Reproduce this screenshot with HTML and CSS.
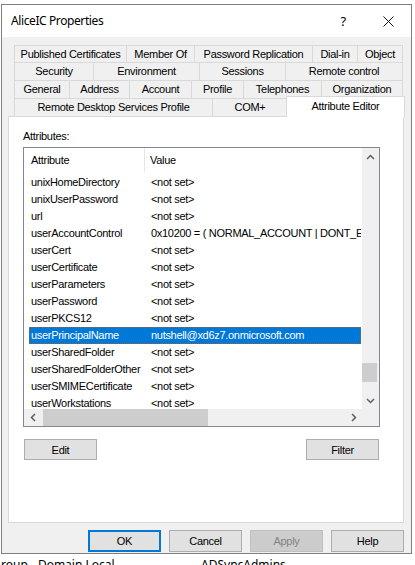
FILE: index.html
```html
<!DOCTYPE html>
<html>
<head>
<meta charset="utf-8">
<link rel="stylesheet" href="styles.css">
</head>
<body>
<div class="screen">
  <div class="window">
    <div class="titlebar">
      <span class="title">AliceIC Properties</span>
      <span class="help">?</span>
      <span class="close">
        <svg width="11" height="11" viewBox="0 0 11 11"><path d="M0.5 0.5 L10.5 10.5 M10.5 0.5 L0.5 10.5" stroke="#111" stroke-width="1" fill="none"/></svg>
      </span>
    </div>
    <div class="client">
      <div class="tabs">
        <div class="tab-row row-first">
          <div class="tab w113">Published Certificates</div>
          <div class="tab w69">Member Of</div>
          <div class="tab w119">Password Replication</div>
          <div class="tab w46">Dial-in</div>
          <div class="tab w46">Object</div>
        </div>
        <div class="tab-row">
          <div class="tab w80">Security</div>
          <div class="tab w107">Environment</div>
          <div class="tab w87">Sessions</div>
          <div class="tab w118">Remote control</div>
        </div>
        <div class="tab-row">
          <div class="tab w56">General</div>
          <div class="tab w61">Address</div>
          <div class="tab w63">Account</div>
          <div class="tab w53">Profile</div>
          <div class="tab w79">Telephones</div>
          <div class="tab w82">Organization</div>
        </div>
        <div class="tab-row">
          <div class="tab w199">Remote Desktop Services Profile</div>
          <div class="tab w76">COM+</div>
          <div class="tab tab-selected">Attribute Editor</div>
        </div>
      </div>
      <div class="panel">
        <div class="label">Attributes:</div>
        <div class="listbox">
          <div class="list-main">
            <div class="list-view">
              <div class="list-header">
                <div class="hcol hcol-attr">Attribute</div>
                <div class="hcol hcol-val">Value</div>
              </div>
              <div class="rows">
                <div class="row"><span class="c1">unixHomeDirectory</span><span class="c2">&lt;not set&gt;</span></div>
                <div class="row"><span class="c1">unixUserPassword</span><span class="c2">&lt;not set&gt;</span></div>
                <div class="row"><span class="c1">url</span><span class="c2">&lt;not set&gt;</span></div>
                <div class="row"><span class="c1">userAccountControl</span><span class="c2">0x10200 = ( NORMAL_ACCOUNT | DONT_EXPIRE_PASSWD )</span></div>
                <div class="row"><span class="c1">userCert</span><span class="c2">&lt;not set&gt;</span></div>
                <div class="row"><span class="c1">userCertificate</span><span class="c2">&lt;not set&gt;</span></div>
                <div class="row"><span class="c1">userParameters</span><span class="c2">&lt;not set&gt;</span></div>
                <div class="row"><span class="c1">userPassword</span><span class="c2">&lt;not set&gt;</span></div>
                <div class="row"><span class="c1">userPKCS12</span><span class="c2">&lt;not set&gt;</span></div>
                <div class="row row-selected"><span class="c1">userPrincipalName</span><span class="c2">nutshell@xd6z7.onmicrosoft.com</span></div>
                <div class="row"><span class="c1">userSharedFolder</span><span class="c2">&lt;not set&gt;</span></div>
                <div class="row"><span class="c1">userSharedFolderOther</span><span class="c2">&lt;not set&gt;</span></div>
                <div class="row"><span class="c1">userSMIMECertificate</span><span class="c2">&lt;not set&gt;</span></div>
                <div class="row"><span class="c1">userWorkstations</span><span class="c2">&lt;not set&gt;</span></div>
              </div>
            </div>
            <div class="vscroll">
              <div class="sb-btn">
                <svg width="9" height="6" viewBox="0 0 9 6"><path d="M1 5 L4.5 1.5 L8 5" stroke="#606060" stroke-width="1.5" fill="none"/></svg>
              </div>
              <div class="vtrack"><div class="vthumb"></div></div>
              <div class="sb-btn">
                <svg width="9" height="6" viewBox="0 0 9 6"><path d="M1 1 L4.5 4.5 L8 1" stroke="#606060" stroke-width="1.5" fill="none"/></svg>
              </div>
            </div>
          </div>
          <div class="hscroll-row">
            <div class="hscroll">
              <div class="sb-btn-h">
                <svg width="6" height="9" viewBox="0 0 6 9"><path d="M5 1 L1.5 4.5 L5 8" stroke="#606060" stroke-width="1.5" fill="none"/></svg>
              </div>
              <div class="htrack"><div class="hthumb"></div></div>
              <div class="sb-btn-h">
                <svg width="6" height="9" viewBox="0 0 6 9"><path d="M1 1 L4.5 4.5 L1 8" stroke="#606060" stroke-width="1.5" fill="none"/></svg>
              </div>
            </div>
            <div class="corner"></div>
          </div>
        </div>
        <div class="panel-buttons">
          <button class="btn">Edit</button>
          <button class="btn">Filter</button>
        </div>
      </div>
      <div class="dialog-buttons">
        <button class="btn btn-big btn-default">OK</button>
        <button class="btn btn-big">Cancel</button>
        <button class="btn btn-big btn-disabled">Apply</button>
        <button class="btn btn-big">Help</button>
      </div>
    </div>
  </div>
  <div class="behind">
    <span class="behind-left">roup - Domain Local</span>
    <span class="behind-right">ADSyncAdmins</span>
  </div>
</div>
</body>
</html>
```
FILE: styles.css
```css
* { box-sizing: border-box; }
html, body { margin: 0; padding: 0; background: #ffffff; }
.screen {
  width: 415px;
  height: 565px;
  overflow: hidden;
  position: relative;
  background: #ffffff;
  font-family: "Liberation Sans", Arial, sans-serif;
  font-size: 11px;
  letter-spacing: -0.3px;
  color: #000;
}
.window {
  margin: 4px 0 0 1px;
  width: 411px;
  height: 550px;
  border: 1px solid #7f7f7f;
  display: flex;
  flex-direction: column;
}
.titlebar {
  height: 32px;
  flex: 0 0 32px;
  background: #ffffff;
  display: flex;
  align-items: center;
  font-family: "Noto Sans", "Segoe UI", sans-serif;
  font-size: 12px;
  letter-spacing: -0.4px;
}
.title { flex: 1; padding-left: 9px; padding-bottom: 1px; color: #000; }
.help { width: 46px; text-align: center; font-size: 13px; }
.close { width: 45px; display: flex; justify-content: center; align-items: center; }
.client {
  flex: 1;
  background: #f0f0f0;
  padding-top: 8px;
  display: flex;
  flex-direction: column;
}
.tabs { margin-left: 12px; width: 389px; }
.tab-row { display: flex; height: 19px; margin-top: -1px; }
.tab-row.row-first { height: 18px; margin-top: 0; }
.tab {
  flex-shrink: 0;
  border: 1px solid #d9d9d9;
  margin-left: -1px;
  background: #f0f0f0;
  display: flex;
  align-items: center;
  justify-content: center;
  white-space: nowrap;
  padding-bottom: 1px;
}
.tab:first-child { margin-left: 0; }
.w46 { width: 46px; } .w53 { width: 53px; } .w56 { width: 56px; } .w61 { width: 61px; }
.w63 { width: 63px; } .w69 { width: 69px; } .w76 { width: 76px; } .w79 { width: 79px; }
.w80 { width: 80px; } .w82 { width: 82px; } .w87 { width: 87px; } .w107 { width: 107px; }
.w113 { width: 113px; } .w118 { width: 118px; } .w119 { width: 119px; } .w199 { width: 199px; }
.tab-selected {
  width: 119px;
  height: 21px;
  margin-top: -2px;
  margin-left: -2px;
  background: #ffffff;
  border-bottom: none;
  position: relative;
  z-index: 2;
  padding-bottom: 3px;
}
.panel {
  margin: -1px 0 0 6px;
  width: 396px;
  height: 407px;
  background: #ffffff;
  border: 1px solid #d9d9d9;
  display: flex;
  flex-direction: column;
}
.label { margin: 13px 0 4px 14px; height: 13px; line-height: 13px; }
.listbox {
  margin-left: 14px;
  width: 357px;
  height: 280px;
  border: 1px solid #828790;
  display: flex;
  flex-direction: column;
}
.list-main { display: flex; height: 261px; }
.list-view { width: 338px; height: 261px; overflow: hidden; background: #fff; }
.list-header { display: flex; height: 24px; }
.hcol { display: flex; align-items: center; height: 24px; }
.hcol-attr { width: 121px; padding-left: 7px; border-right: 1px solid #e5e5e5; }
.hcol-val { padding-left: 5px; }
.rows { margin-top: 2px; }
.row {
  display: flex;
  height: 17px;
  line-height: 17px;
  margin-left: 5px;
  width: 332px;
  white-space: nowrap;
  overflow: hidden;
}
.c1 { width: 122px; flex-shrink: 0; padding-left: 2px; }
.c2 { white-space: nowrap; }
.row-selected {
  background: #0078d7;
  color: #ffffff;
  outline: 1px dotted #a0622a;
  outline-offset: -1px;
}
.vscroll {
  width: 17px;
  background: #f0f0f0;
  display: flex;
  flex-direction: column;
}
.sb-btn { height: 17px; flex: 0 0 17px; display: flex; align-items: center; justify-content: center; }
.vtrack { flex: 1; }
.vthumb { width: 15px; height: 19px; margin-top: 198px; background: #cdcdcd; }
.hscroll-row { display: flex; height: 17px; }
.hscroll { width: 338px; background: #f0f0f0; display: flex; }
.sb-btn-h { width: 17px; flex: 0 0 17px; display: flex; align-items: center; justify-content: center; }
.htrack { flex: 1; }
.hthumb { width: 165px; height: 17px; margin-left: 2px; background: #cdcdcd; }
.corner { width: 17px; background: #f0f0f0; }
.btn {
  font-family: "Liberation Sans", Arial, sans-serif;
  font-size: 11px;
  letter-spacing: -0.3px;
  color: #000;
  width: 73px;
  height: 21px;
  background: #e1e1e1;
  border: 1px solid #adadad;
  padding: 0;
  margin: 0;
}
.panel-buttons {
  display: flex;
  justify-content: space-between;
  margin: 12px 24px 0 15px;
}
.dialog-buttons {
  display: flex;
  justify-content: flex-end;
  gap: 8px;
  margin-top: 7px;
  padding-right: 7px;
}
.btn-big { height: 22px; }
.btn-default { border: 2px solid #0078d7; }
.btn-disabled { background: #cccccc; border-color: #bfbfbf; color: #838383; }
.behind {
  display: flex;
  font-family: "Noto Sans", "Segoe UI", sans-serif;
  font-size: 12px;
  letter-spacing: 0;
  line-height: 16px;
  padding-top: 3px;
}
.behind-left { width: 201px; padding-left: 1px; }
```
